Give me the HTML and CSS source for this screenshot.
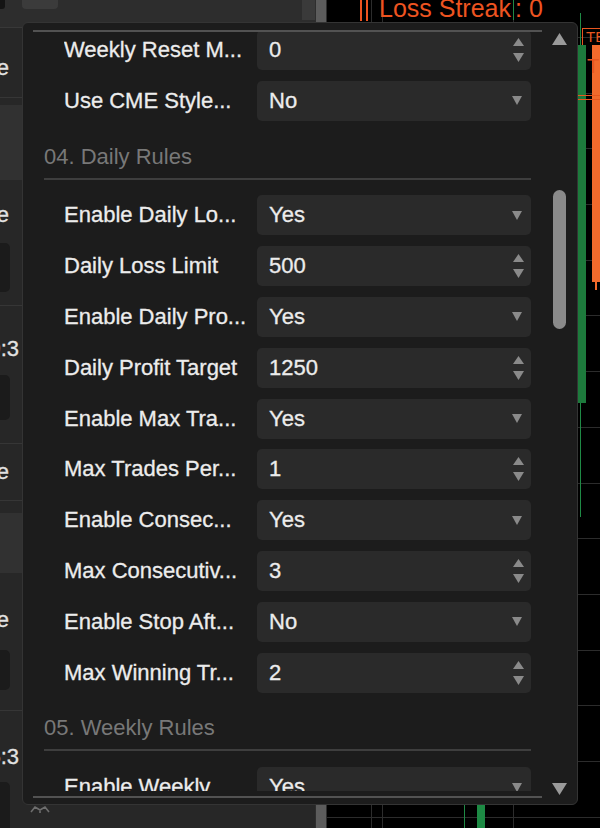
FILE: index.html
```html
<!DOCTYPE html>
<html lang="en">
<head>
<meta charset="utf-8">
<title>Strategy Parameters</title>
<link rel="stylesheet" href="styles.css">
</head>
<body>
<div class="app">
  <aside class="lp">
    <div class="lp-content">
      <div class="lp-toolbar">
        <span class="tb-dark"></span>
        <span class="tb-btn"></span>
        <span class="tb-right"></span>
      </div>
      <div class="lp-group g1">
        <div class="lp-label w-e"><span>Max Trade</span></div>
      </div>
      <div class="lp-group g2">
        <div class="lp-light lb1"></div>
        <div class="lp-label w-e l2"><span>Enable Trade</span></div>
        <div class="lp-box b2"></div>
      </div>
      <div class="lp-group g3">
        <div class="lp-label w-t l3"><span>Start 09:3</span></div>
        <div class="lp-box b3"></div>
      </div>
      <div class="lp-group g4">
        <div class="lp-label w-e l4"><span>Flatten Trade</span></div>
      </div>
      <div class="lp-group g5">
        <div class="lp-light lb5"></div>
        <div class="lp-label w-e l5"><span>Close Trade</span></div>
        <div class="lp-box b5"></div>
      </div>
      <div class="lp-group g6">
        <div class="lp-label w-t l6"><span>End 15:3</span></div>
        <div class="lp-row6">
          <div class="lp-box b6"></div>
          <svg class="lp-icon" width="20" height="8" viewBox="0 0 20 8"><path d="M1 7 L5 2 L10 5 L15 2 L19 7 M10 5 L10 8" fill="none" stroke="#6e6e6e" stroke-width="1.6"/></svg>
        </div>
      </div>
    </div>
    <div class="lp-scroll"><div class="lp-thumb"></div></div>
  </aside>

  <main class="chart">
    <div class="chart-title">
      <span class="bars"></span>
      <span class="ls">Loss Streak</span><span class="ls-val">: 0</span>
    </div>
    <span class="c wick-top"></span>
    <span class="c g-wick1"></span>
    <span class="c g-body1"></span>
    <span class="c g-wick2"></span>
    <span class="c o-body"></span>
    <span class="c o-tip"></span>
    <span class="c o-tag">TE</span>
    <span class="c o-t">T</span>
    <span class="c o-line1"></span>
    <span class="c o-line2"></span>
    <span class="c g-wick3"></span>
    <span class="c g-body3"></span>
  </main>
</div>

<div class="dialog">
  <div class="dlg-main">
    <div class="sep"></div>
    <div class="viewport">
      <div class="content">
        <div class="row"><span class="label">Weekly Reset M...</span><div class="field"><span class="val">0</span><svg class="stepper" width="11" height="24" viewBox="0 0 11 24"><polygon points="0,8 5.5,0 11,8"/><polygon points="0,15 11,15 5.5,24"/></svg></div></div>
        <div class="row"><span class="label">Use CME Style...</span><div class="field"><span class="val">No</span><svg class="dd" width="10" height="9" viewBox="0 0 10 9"><polygon points="0,0 10,0 5,9"/></svg></div></div>

        <div class="section"><div class="section-title">04. Daily Rules</div><div class="section-line"></div></div>

        <div class="row"><span class="label">Enable Daily Lo...</span><div class="field"><span class="val">Yes</span><svg class="dd" width="10" height="9" viewBox="0 0 10 9"><polygon points="0,0 10,0 5,9"/></svg></div></div>
        <div class="row"><span class="label">Daily Loss Limit</span><div class="field"><span class="val">500</span><svg class="stepper" width="11" height="24" viewBox="0 0 11 24"><polygon points="0,8 5.5,0 11,8"/><polygon points="0,15 11,15 5.5,24"/></svg></div></div>
        <div class="row"><span class="label">Enable Daily Pro...</span><div class="field"><span class="val">Yes</span><svg class="dd" width="10" height="9" viewBox="0 0 10 9"><polygon points="0,0 10,0 5,9"/></svg></div></div>
        <div class="row"><span class="label">Daily Profit Target</span><div class="field"><span class="val">1250</span><svg class="stepper" width="11" height="24" viewBox="0 0 11 24"><polygon points="0,8 5.5,0 11,8"/><polygon points="0,15 11,15 5.5,24"/></svg></div></div>
        <div class="row"><span class="label">Enable Max Tra...</span><div class="field"><span class="val">Yes</span><svg class="dd" width="10" height="9" viewBox="0 0 10 9"><polygon points="0,0 10,0 5,9"/></svg></div></div>
        <div class="row"><span class="label">Max Trades Per...</span><div class="field"><span class="val">1</span><svg class="stepper" width="11" height="24" viewBox="0 0 11 24"><polygon points="0,8 5.5,0 11,8"/><polygon points="0,15 11,15 5.5,24"/></svg></div></div>
        <div class="row"><span class="label">Enable Consec...</span><div class="field"><span class="val">Yes</span><svg class="dd" width="10" height="9" viewBox="0 0 10 9"><polygon points="0,0 10,0 5,9"/></svg></div></div>
        <div class="row"><span class="label">Max Consecutiv...</span><div class="field"><span class="val">3</span><svg class="stepper" width="11" height="24" viewBox="0 0 11 24"><polygon points="0,8 5.5,0 11,8"/><polygon points="0,15 11,15 5.5,24"/></svg></div></div>
        <div class="row"><span class="label">Enable Stop Aft...</span><div class="field"><span class="val">No</span><svg class="dd" width="10" height="9" viewBox="0 0 10 9"><polygon points="0,0 10,0 5,9"/></svg></div></div>
        <div class="row"><span class="label">Max Winning Tr...</span><div class="field"><span class="val">2</span><svg class="stepper" width="11" height="24" viewBox="0 0 11 24"><polygon points="0,8 5.5,0 11,8"/><polygon points="0,15 11,15 5.5,24"/></svg></div></div>

        <div class="section"><div class="section-title">05. Weekly Rules</div><div class="section-line"></div></div>

        <div class="row"><span class="label">Enable Weekly...</span><div class="field"><span class="val">Yes</span><svg class="dd" width="10" height="9" viewBox="0 0 10 9"><polygon points="0,0 10,0 5,9"/></svg></div></div>
        <div class="row"><span class="label">Weekly Loss Li...</span><div class="field"><span class="val">1500</span><svg class="stepper" width="11" height="24" viewBox="0 0 11 24"><polygon points="0,8 5.5,0 11,8"/><polygon points="0,15 11,15 5.5,24"/></svg></div></div>
      </div>
    </div>
    <div class="sep"></div>
  </div>
  <div class="vscroll">
    <svg class="arr-up" width="15" height="12" viewBox="0 0 15 12"><polygon points="0,12 7.5,0 15,12"/></svg>
    <div class="track"><div class="thumb"></div></div>
    <svg class="arr-down" width="15" height="12" viewBox="0 0 15 12"><polygon points="0,0 15,0 7.5,12"/></svg>
  </div>
</div>
</body>
</html>
```

FILE: styles.css
```css
* { box-sizing: border-box; }
html, body { margin: 0; padding: 0; }
body {
  width: 600px;
  height: 828px;
  overflow: hidden;
  position: relative;
  background: #000;
  font-family: "Liberation Sans", Arial, sans-serif;
}

/* ---------- background app ---------- */
.app {
  display: grid;
  grid-template-columns: 327px 1fr;
  height: 828px;
}

.lp {
  display: flex;
  background: #272727;
  overflow: hidden;
}
.lp-content {
  flex: 1;
  min-width: 0;
  display: flex;
  flex-direction: column;
}
.lp-scroll {
  width: 12px;
  background: #2e2e2e;
  padding: 0 1px;
}
.lp-thumb {
  height: 100%;
  background: #5c5c5c;
}

.lp-toolbar {
  height: 28px;
  flex: none;
  display: flex;
  align-items: flex-start;
  background: #2d2d2d;
  border-bottom: 1px solid #383838;
}
.tb-dark {
  width: 5px;
  height: 9px;
  background: #141414;
  border-bottom-right-radius: 3px;
}
.tb-btn {
  margin-left: 17px;
  width: 36px;
  height: 9px;
  background: #3b3b3b;
  border-radius: 0 0 4px 4px;
}
.tb-right {
  margin-left: auto;
  width: 13px;
  height: 20px;
  background: #3a3a3a;
}

.lp-group {
  flex: none;
  display: flex;
  flex-direction: column;
  border-bottom: 1px solid #363636;
}
.g1 { height: 70px; padding-top: 30px; }
.g2 { height: 208px; }
.g3 { height: 138px; }
.g4 { height: 57px; }
.g5 { height: 210px; }
.g6 { flex: 1; border-bottom: none; }

.lp-label {
  display: flex;
  justify-content: flex-end;
  white-space: nowrap;
  font-size: 22px;
  line-height: 20px;
  color: #e2e2e2;
  -webkit-text-stroke: 0.3px #e2e2e2;
}
.w-e { width: 9px; }
.w-t { width: 19px; }

.lp-light { background: #313131; }
.lb1 { margin-top: 7px; height: 75px; }
.lb5 { margin-top: 12px; height: 60px; }

.lp-box {
  width: 10px;
  background: #1b1b1b;
  border-radius: 0 5px 5px 0;
}
.l2 { margin-top: 25px; }
.b2 { margin-top: 18px; height: 49px; }
.l3 { margin-top: 33px; }
.b3 { margin-top: 16px; height: 45px; }
.l4 { margin-top: 18px; }
.l5 { margin-top: 37px; }
.b5 { margin-top: 20px; height: 40px; }
.l6 { margin-top: 36px; }
.lp-row6 {
  margin-top: 15px;
  display: flex;
  align-items: flex-start;
}
.b6 { height: 60px; }
.lp-icon { margin-left: 20px; margin-top: 23px; }

/* chart */
.chart {
  position: relative;
  overflow: hidden;
  background-color: #000;
  background-image:
    repeating-linear-gradient(180deg, #2c2c2c 0 1px, transparent 1px 55.7px),
    repeating-linear-gradient(90deg, #2c2c2c 0 1px, transparent 1px 131px);
  background-position: 0 37px, 55px 0;
}
.chart-title {
  display: flex;
  align-items: center;
  margin-top: -4px;
  padding-left: 33px;
  font-size: 25px;
  line-height: 25px;
  color: #ee5420;
  white-space: nowrap;
}
.bars {
  width: 8px;
  height: 24px;
  border-left: 2px solid #ee5420;
  border-right: 2px solid #ee5420;
  margin-right: 11px;
}
.ls-val { margin-left: 4px; }

.c { position: absolute; display: block; }
.wick-top { left: 186px; top: 0; width: 1px; height: 20px; background: #1f8a45; }
.g-wick1 { left: 253px; top: 13px; width: 1px; height: 33px; background: #1f8a45; }
.g-body1 { left: 251px; top: 45px; width: 8px; height: 358px; background: #1d7a3c; }
.g-wick2 { left: 253px; top: 403px; width: 1px; height: 114px; background: #1f8a45; }
.o-body { left: 265px; top: 45px; width: 8px; height: 237px; background: #f26a2c; }
.o-tip { left: 268px; top: 282px; width: 2px; height: 8px; background: #f26a2c; }
.o-tag {
  left: 255px; top: 28px;
  height: 17px;
  padding-left: 3px;
  border-left: 1px solid #e8561f;
  border-top: 1px solid #e8561f;
  font-size: 15px; line-height: 16px;
  color: #e8561f;
}
.o-t { left: 260px; top: 56px; font-size: 20px; line-height: 20px; color: #e8561f; }
.o-line1 { left: 251px; top: 95px; width: 22px; height: 1px; background: #e8561f; }
.o-line2 { left: 251px; top: 99px; width: 22px; height: 1px; background: #e8561f; }
.g-wick3 { left: 137px; top: 780px; width: 1px; height: 48px; background: #1f8a45; }
.g-body3 { left: 150px; top: 760px; width: 8px; height: 68px; background: #1d8a44; }

/* ---------- dialog ---------- */
.dialog {
  position: absolute;
  left: 22px;
  top: 22px;
  width: 556px;
  height: 783px;
  display: flex;
  padding: 7px 0 6px 10px;
  background: #1c1c1c;
  border: 1px solid #343434;
  border-radius: 6px;
}
.dlg-main {
  flex: 1;
  min-width: 0;
  display: flex;
  flex-direction: column;
}
.sep {
  flex: none;
  height: 2px;
  background: #525252;
}
.viewport {
  flex: 1;
  min-height: 0;
  overflow: hidden;
  margin-bottom: 5px;
}
.content {
  margin-top: -2px;
  padding: 0 11px;
  display: flex;
  flex-direction: column;
  gap: 10.8px;
}
.row {
  flex: none;
  height: 40px;
  display: flex;
  align-items: center;
  padding-left: 20px;
  font-size: 22px;
  color: #ececec;
  -webkit-text-stroke: 0.3px #ececec;
}
.label {
  flex: none;
  width: 193px;
  white-space: nowrap;
  overflow: hidden;
}
.field {
  flex: 1;
  height: 40px;
  display: flex;
  align-items: center;
  padding: 0 7px 0 12px;
  background: #2a2a2a;
  border-radius: 5px;
}
.val { flex: 1; }
.stepper polygon, .dd polygon { fill: #8a8a8a; }
.dd { margin-right: 2px; }

.section {
  flex: none;
  height: 53px;
  padding-top: 12px;
}
.section-title {
  font-size: 22px;
  line-height: 26px;
  color: #787878;
}
.section-line {
  margin-top: 8px;
  height: 2px;
  background: #3e3e3e;
}

.vscroll {
  width: 35px;
  flex: none;
  display: flex;
  flex-direction: column;
  align-items: center;
}
.vscroll polygon { fill: #9a9a9a; }
.arr-up { margin-top: 3px; flex: none; }
.arr-down { margin-bottom: 3px; flex: none; }
.track {
  flex: 1;
  display: flex;
  flex-direction: column;
  align-items: center;
}
.thumb {
  margin-top: 145px;
  width: 13px;
  height: 139px;
  border-radius: 7px;
  background: #8a8a8a;
}
```
